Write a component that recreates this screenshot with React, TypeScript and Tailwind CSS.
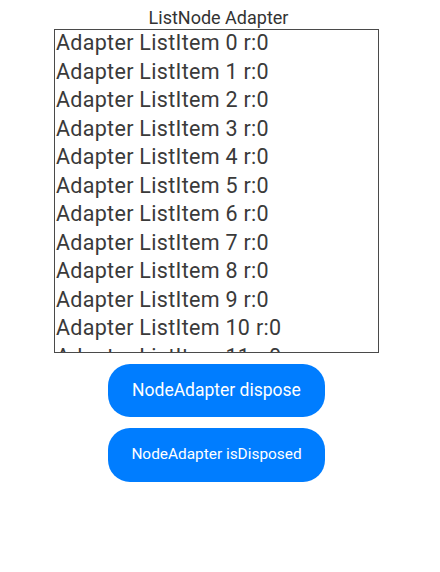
const items = Array.from({ length: 14 }, (_, i) => `Adapter ListItem ${i} r:0`);

function App() {
  return (
    <div
      className="flex flex-col bg-white w-[440px] h-[572px]"
      style={{ fontFamily: 'Roboto, "Noto Sans", sans-serif' }}
    >
      <p className="h-[29px] pt-[7px] text-center text-[18px] leading-[22px] text-[#333] ml-[-3px]">
        ListNode Adapter
      </p>
      <div className="w-[325px] h-[324px] border border-[#4a4a4a] overflow-hidden ml-[54px]">
        {items.map((item) => (
          <div
            key={item}
            className="h-[28.5px] pl-[1px] text-[21.5px] leading-[25px] tracking-[0.3px] text-[#3a3a3a] whitespace-nowrap"
          >
            {item}
          </div>
        ))}
      </div>
      <div className="flex flex-col gap-[11px] mt-[11px] ml-[108px]">
        <button className="w-[217px] h-[53px] rounded-[22px] bg-[#007dff] text-white text-[17.5px]">
          NodeAdapter dispose
        </button>
        <button className="w-[217px] h-[54px] rounded-[22px] bg-[#007dff] text-white text-[15.4px]">
          NodeAdapter isDisposed
        </button>
      </div>
    </div>
  );
}

export default App;
